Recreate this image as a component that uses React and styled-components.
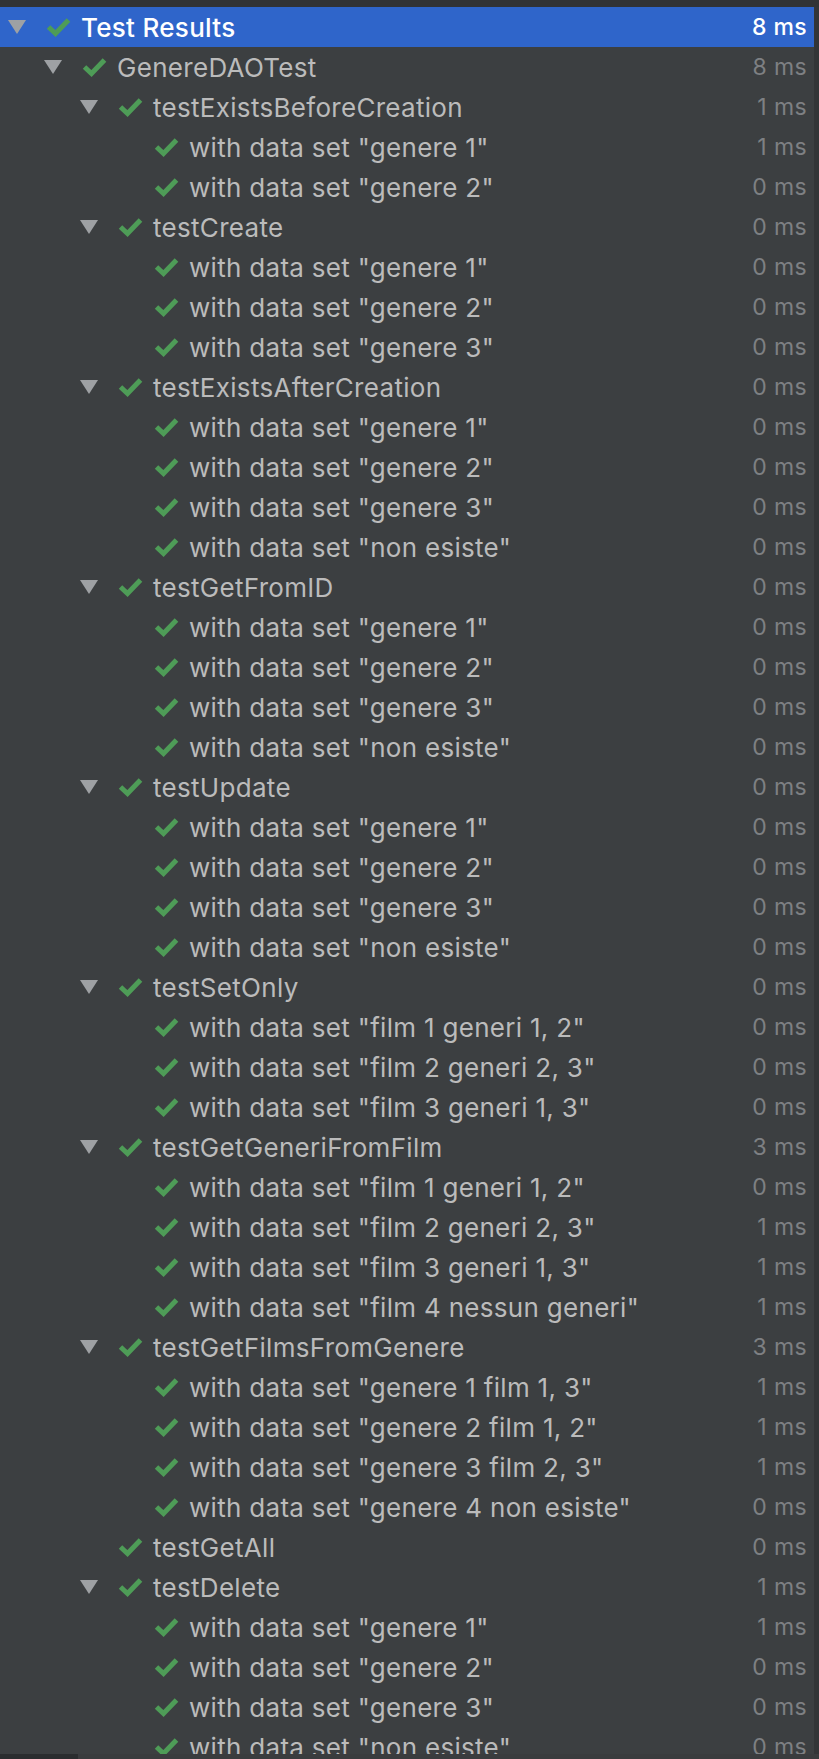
import styled, { createGlobalStyle } from "styled-components";

const GlobalStyle = createGlobalStyle`
  html, body {
    margin: 0;
    padding: 0;
    background: #3c3f41;
  }
`;

const ds = (names, times) =>
  names.map((n, i) => ({ name: `with data set "${n}"`, time: times[i] }));

const tree = {
  name: "Test Results",
  time: "8 ms",
  children: [
    {
      name: "GenereDAOTest",
      time: "8 ms",
      children: [
        {
          name: "testExistsBeforeCreation",
          time: "1 ms",
          children: ds(["genere 1", "genere 2"], ["1 ms", "0 ms"]),
        },
        {
          name: "testCreate",
          time: "0 ms",
          children: ds(["genere 1", "genere 2", "genere 3"], ["0 ms", "0 ms", "0 ms"]),
        },
        {
          name: "testExistsAfterCreation",
          time: "0 ms",
          children: ds(
            ["genere 1", "genere 2", "genere 3", "non esiste"],
            ["0 ms", "0 ms", "0 ms", "0 ms"]
          ),
        },
        {
          name: "testGetFromID",
          time: "0 ms",
          children: ds(
            ["genere 1", "genere 2", "genere 3", "non esiste"],
            ["0 ms", "0 ms", "0 ms", "0 ms"]
          ),
        },
        {
          name: "testUpdate",
          time: "0 ms",
          children: ds(
            ["genere 1", "genere 2", "genere 3", "non esiste"],
            ["0 ms", "0 ms", "0 ms", "0 ms"]
          ),
        },
        {
          name: "testSetOnly",
          time: "0 ms",
          children: ds(
            ["film 1 generi 1, 2", "film 2 generi 2, 3", "film 3 generi 1, 3"],
            ["0 ms", "0 ms", "0 ms"]
          ),
        },
        {
          name: "testGetGeneriFromFilm",
          time: "3 ms",
          children: ds(
            [
              "film 1 generi 1, 2",
              "film 2 generi 2, 3",
              "film 3 generi 1, 3",
              "film 4 nessun generi",
            ],
            ["0 ms", "1 ms", "1 ms", "1 ms"]
          ),
        },
        {
          name: "testGetFilmsFromGenere",
          time: "3 ms",
          children: ds(
            [
              "genere 1 film 1, 3",
              "genere 2 film 1, 2",
              "genere 3 film 2, 3",
              "genere 4 non esiste",
            ],
            ["1 ms", "1 ms", "1 ms", "0 ms"]
          ),
        },
        { name: "testGetAll", time: "0 ms" },
        {
          name: "testDelete",
          time: "1 ms",
          children: ds(
            ["genere 1", "genere 2", "genere 3", "non esiste"],
            ["1 ms", "0 ms", "0 ms", "0 ms"]
          ),
        },
      ],
    },
  ],
};

function flatten(node, level = 0, out = []) {
  out.push({ ...node, level, folder: !!node.children });
  (node.children || []).forEach((c) => flatten(c, level + 1, out));
  return out;
}

const rows = flatten(tree);

function Arrow() {
  return (
    <svg width="18" height="14" viewBox="0 0 18 14">
      <polygon points="0,0 18,0 9,14" fill="#9ea1a4" />
    </svg>
  );
}

function Check() {
  return (
    <svg width="25" height="20" viewBox="0 0 25 20">
      <polyline
        points="2.5,10 9.5,16.5 22.5,3"
        fill="none"
        stroke="#4e9c57"
        strokeWidth="5"
        strokeLinecap="butt"
        strokeLinejoin="miter"
      />
    </svg>
  );
}

export default function App() {
  return (
    <>
      <GlobalStyle />
      <Window>
        <TopStrip />
        <Body>
          <List>
            {rows.map((r, i) => (
              <Row key={i} $selected={i === 0}>
                <Indent $level={r.level} />
                <ArrowSlot>{r.folder && <Arrow />}</ArrowSlot>
                <CheckSlot>
                  <Check />
                </CheckSlot>
                <Label $selected={i === 0}>{r.name}</Label>
                <Time $selected={i === 0}>{r.time}</Time>
              </Row>
            ))}
          </List>
          <Scrollbar />
        </Body>
        <BottomStrip>
          <BottomTab />
        </BottomStrip>
      </Window>
    </>
  );
}

const Window = styled.div`
  height: 1759px;
  width: 819px;
  display: flex;
  flex-direction: column;
  overflow: hidden;
  background: #3c3f41;
  font-family: Inter, "Noto Sans", sans-serif;
`;

const TopStrip = styled.div`
  height: 7px;
  flex: none;
  background: #313335;
`;

const Body = styled.div`
  flex: 1;
  display: flex;
  min-height: 0;
`;

const List = styled.div`
  flex: 1;
  overflow: hidden;
`;

const Scrollbar = styled.div`
  width: 5px;
  flex: none;
  background: #333537;
`;

const Row = styled.div`
  height: 40px;
  display: flex;
  align-items: center;
  padding-right: 7px;
  background: ${(p) => (p.$selected ? "#2f65ca" : "transparent")};
`;

const Indent = styled.div`
  flex: none;
  width: ${(p) => 8 + p.$level * 36}px;
`;

const ArrowSlot = styled.div`
  flex: none;
  width: 18px;
  height: 14px;
  display: flex;
  margin-right: 20px;
`;

const CheckSlot = styled.div`
  flex: none;
  width: 25px;
  height: 20px;
  display: flex;
  margin-right: 10px;
`;

const Label = styled.div`
  flex: 1;
  font-size: 26px;
  letter-spacing: 0.3px;
  color: ${(p) => (p.$selected ? "#ffffff" : "#bbbbbb")};
  font-weight: ${(p) => (p.$selected ? 500 : 400)};
  white-space: nowrap;
`;

const Time = styled.div`
  flex: none;
  font-size: 23px;
  letter-spacing: 0.4px;
  color: ${(p) => (p.$selected ? "#ffffff" : "#7e8083")};
  font-weight: ${(p) => (p.$selected ? 500 : 400)};
  white-space: nowrap;
`;

const BottomStrip = styled.div`
  height: 5px;
  flex: none;
  display: flex;
  background: #2b2d2f;
`;

const BottomTab = styled.div`
  margin-left: 78px;
  flex: 1;
  background: #3a3c3e;
`;
